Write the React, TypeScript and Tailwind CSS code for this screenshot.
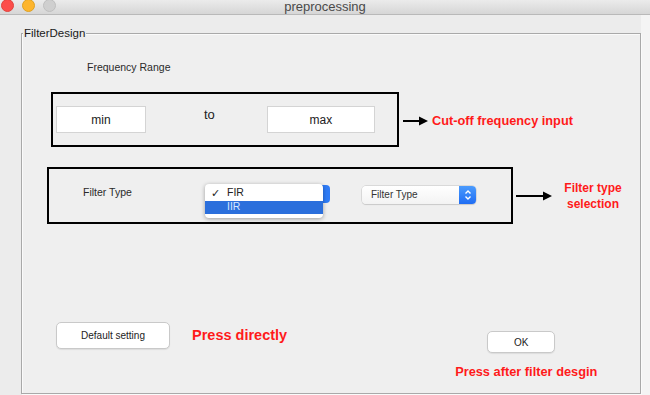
import React from "react";

const font = { fontFamily: '"Liberation Sans", Arial, sans-serif' };

function Arrow({ w }: { w: number }) {
  return (
    <svg width={w} height="10" viewBox={`0 0 ${w} 10`} className="shrink-0">
      <line x1="0" y1="5" x2={w - 7} y2="5" stroke="#000" strokeWidth="2" />
      <polygon points={`${w - 9},0.5 ${w},5 ${w - 9},9.5`} fill="#000" />
    </svg>
  );
}

function Stepper({ className }: { className: string }) {
  return (
    <div className={className}>
      <svg width="8" height="12" viewBox="0 0 8 12">
        <polyline points="1.5,4.5 4,2 6.5,4.5" fill="none" stroke="#fff" strokeWidth="1.4" />
        <polyline points="1.5,7.5 4,10 6.5,7.5" fill="none" stroke="#fff" strokeWidth="1.4" />
      </svg>
    </div>
  );
}

export default function App() {
  return (
    <div className="w-[650px] h-[395px] bg-[#ececec] overflow-hidden flex flex-col" style={font}>
      {/* title bar */}
      <div className="relative h-[15px] shrink-0 bg-gradient-to-b from-[#ebebeb] to-[#d6d6d6] border-b border-[#b9b9b9] flex items-center">
        <div className="absolute left-[1px] top-[-1px] w-[13px] h-[13px] rounded-full bg-[#fc4d4a] border border-[#e0443e]" />
        <div className="absolute left-[22px] top-[-1px] w-[13px] h-[13px] rounded-full bg-[#fdb52d] border border-[#dea123]" />
        <div className="absolute left-[43px] top-[-1px] w-[13px] h-[13px] rounded-full bg-[#cfcfcf] border border-[#bfbfbf]" />
        <div className="w-full text-center text-[13px] leading-[14px] text-[#4a4a4a]">preprocessing</div>
      </div>

      {/* body */}
      <div className="flex-1 flex">
        <div className="relative mt-[18px] ml-[21px] w-[620px] h-[361px] border border-[#a9a9a9] shadow-[inset_1px_1px_0_#fafafa,1px_1px_0_#fafafa] bg-[#efefef] flex flex-col">
          <span className="absolute left-[1px] top-[-8px] bg-[#ececec] px-[1px] text-[11.5px] leading-[14px] text-[#1a1a1a]">
            FilterDesign
          </span>

          <div className="mt-[27px] pl-[65px] text-[10.5px] leading-[13px] text-[#2a2a2a]">Frequency Range</div>

          {/* row: frequency range */}
          <div className="mt-[18px] ml-[29px] flex items-center">
            <div className="w-[348px] h-[55px] border-2 border-black flex items-center pl-[3px]">
              <div className="w-[90px] h-[27px] bg-white border border-[#d4d4d4] flex items-center justify-center text-[12px] text-[#222]">
                min
              </div>
              <div className="ml-[58px] -mt-[10px] text-[13px] text-[#222]">to</div>
              <div className="ml-[52px] w-[108px] h-[27px] bg-white border border-[#d4d4d4] flex items-center justify-center text-[12px] text-[#222]">
                max
              </div>
            </div>
            <div className="ml-[4px] mt-[2px] flex items-center">
              <Arrow w={25} />
              <span className="ml-[4px] text-[12.75px] font-bold text-[#ff1a1a]">Cut-off frequency input</span>
            </div>
          </div>

          {/* row: filter type */}
          <div className="mt-[20px] ml-[25px] flex items-center">
            <div className="w-[466px] h-[57px] border-2 border-black flex items-center">
              <div className="ml-[34px] -mt-[6px] w-[122px] text-[10.5px] text-[#2a2a2a]">Filter Type</div>
              <div className="relative -mt-[2px] w-[125px] h-[18px]">
                <div className="absolute right-0 top-[-1px] w-[10px] h-[18px] rounded-r-[4px] bg-[#2f7cf6]" />
                <div className="absolute left-0 top-[-2px] w-[118px] rounded-[4px] bg-white shadow-[0_1px_4px_rgba(0,0,0,0.35)] pt-[2px] pb-[4px] text-[10.5px]">
                  <div className="h-[15px] flex items-center text-[#222]">
                    <span className="w-[22px] pl-[6px] text-[11px]">✓</span>
                    <span>FIR</span>
                  </div>
                  <div className="h-[13px] flex items-center bg-[#2b6fdc] text-[#d8e6ff]">
                    <span className="w-[22px]" />
                    <span>IIR</span>
                  </div>
                </div>
              </div>
              <div className="ml-[32px] -mt-[2px] w-[114px] h-[18px] rounded-[4px] bg-gradient-to-b from-white to-[#f3f3f3] shadow-[0_0_0_0.5px_#c4c4c4,0_1px_1px_rgba(0,0,0,0.12)] flex items-center">
                <span className="flex-1 pl-[9px] text-[10px] text-[#333]">Filter Type</span>
                <Stepper className="w-[17px] h-[18px] rounded-r-[4px] bg-gradient-to-b from-[#4b9bfd] to-[#1f6cf3] flex items-center justify-center" />
              </div>
            </div>
            <div className="ml-[3px] flex items-center">
              <Arrow w={36} />
              <div className="ml-[10px] w-[62px] text-center text-[12px] leading-[16px] font-bold text-[#ff1a1a] mt-[1px]">
                Filter type
                <br />
                selection
              </div>
            </div>
          </div>

          {/* bottom */}
          <div className="mt-[98px] flex items-start">
            <div className="ml-[34px] flex items-center">
              <div className="w-[114px] h-[27px] rounded-[5px] bg-white border border-[#c9c9c9] shadow-[0_1px_1px_rgba(0,0,0,0.08)] flex items-center justify-center text-[10px] text-[#222]">
                Default setting
              </div>
              <span className="ml-[22px] text-[14.5px] font-bold text-[#ff1a1a]">Press directly</span>
            </div>
            <div className="ml-[168px] mt-[9px] flex flex-col items-start">
              <div className="ml-[32px] w-[68px] h-[22px] rounded-[5px] bg-white border border-[#c9c9c9] shadow-[0_1px_1px_rgba(0,0,0,0.08)] flex items-center justify-center text-[10px] text-[#222]">
                OK
              </div>
              <span className="mt-[9px] text-[12.8px] font-bold text-[#ff1a1a]">Press after filter desgin</span>
            </div>
          </div>
        </div>
        <div className="flex-1 bg-[#f4f4f4]" />
      </div>
    </div>
  );
}
